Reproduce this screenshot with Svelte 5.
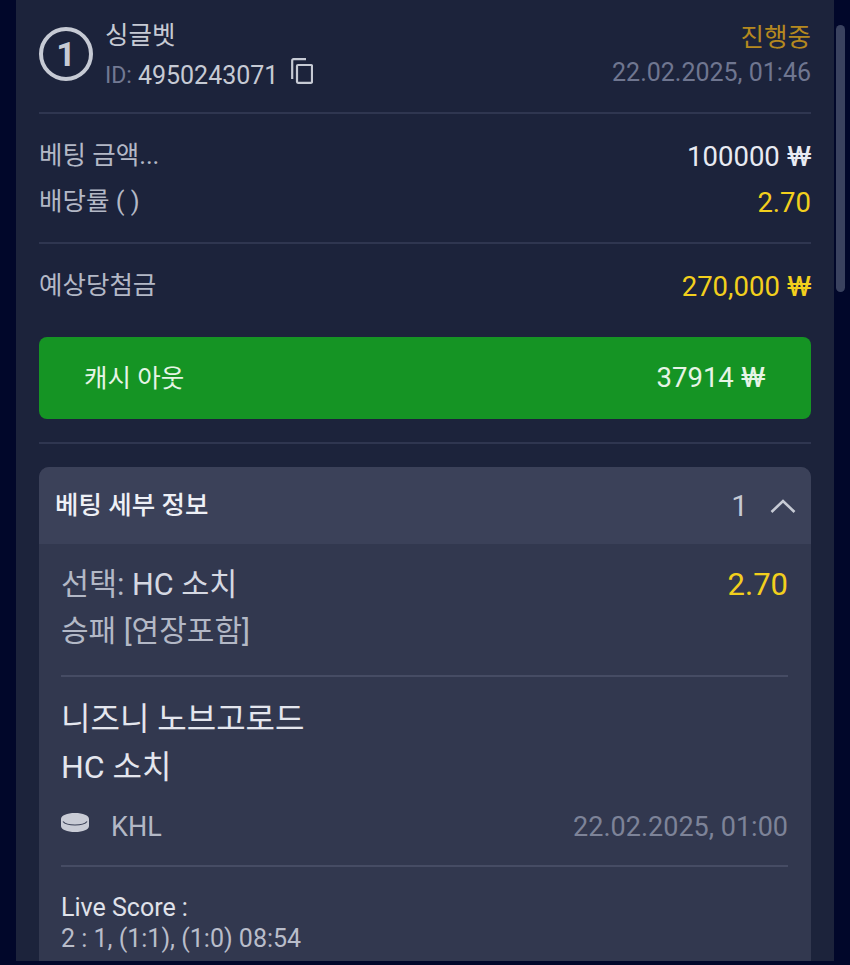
<script lang="ts">
	const rows = [
		{ label: '베팅 금액...', value: '100000', won: true, gold: false },
		{ label: '배당률 ( )', value: '2.70', won: false, gold: true }
	];
</script>

<div class="page">
	<div class="card">
		<!-- header -->
		<div class="head">
			<div class="badge">1</div>
			<div class="head-left">
				<div class="type">싱글벳</div>
				<div class="bet-id">
					<span class="id-label">ID:</span> 4950243071
					<svg class="copy" viewBox="0 0 22 26" width="22" height="26" fill="none" stroke="currentColor" stroke-width="2.2">
						<path d="M1.200 21V2.500a1.300 1.300 0 0 1 1.300-1.300H15" />
						<rect x="6" y="7" width="15" height="17.800" rx="1" />
					</svg>
				</div>
			</div>
			<div class="head-right">
				<div class="status">진행중</div>
				<div class="date">22.02.2025, 01:46</div>
			</div>
		</div>

		<div class="rows">
			{#each rows as r}
				<div class="row">
					<span class="label">{r.label}</span>
					<span class:gold={r.gold} class="value">{r.value}{#if r.won}{' '}<span class="won">₩</span>{/if}</span>
				</div>
			{/each}
		</div>

		<div class="expected">
			<span class="label">예상당첨금</span>
			<span class="value gold">270,000 <span class="won">₩</span></span>
		</div>

		<button class="cashout">
			<span class="cashout-label">캐시 아웃</span>
			<span class="cashout-value">37914 <span class="won">₩</span></span>
		</button>

		<div class="sep"></div>

		<!-- details -->
		<div class="details">
			<div class="details-head">
				<span class="details-title">베팅 세부 정보</span>
				<span class="details-count">1</span>
				<svg class="chevron" viewBox="0 0 26 16" width="26" height="16" fill="none" stroke="currentColor" stroke-width="2.6">
					<path d="M1.500 14 13 3l11.500 11" />
				</svg>
			</div>
			<div class="details-body">
				<div class="pick">
					<div>
						<div class="pick-name"><span class="muted">선택:</span> HC 소치</div>
						<div class="market">승패 [연장포함]</div>
					</div>
					<div class="odds">2.70</div>
				</div>
				<div class="teams">
					<div>니즈니 노브고로드</div>
					<div>HC 소치</div>
				</div>
				<div class="league">
					<svg viewBox="0 0 28 20" width="28" height="20">
						<path d="M0 6c0-3.500 6-6 14-6s14 2.500 14 6v7c0 3.500-6 6-14 6S0 16.500 0 13z" fill="#c9ccd6" />
						<path d="M2 8.500c2 2.500 6.500 3.500 12 3.500s10-1 12-3.500" fill="none" stroke="#3a4056" stroke-width="1.200" />
					</svg>
					<span class="league-name">KHL</span>
					<span class="league-date">22.02.2025, 01:00</span>
				</div>
				<div class="score">
					<div class="score-title">Live Score :</div>
					<div class="score-line">2 : 1, (1:1), (1:0) 08:54</div>
				</div>
			</div>
		</div>
	</div>
	<div class="scrollbar"></div>
</div>

<style>
	:global(body) {
		margin: 0;
		background: #01072a;
		font-family: Roboto, 'Noto Sans CJK KR', sans-serif;
	}

	.page {
		height: 965px;
		overflow: hidden;
		position: relative;
		padding: 0 16px;
		box-sizing: border-box;
	}

	.card {
		display: flex;
		flex-direction: column;
		height: 961px;
		box-sizing: border-box;
		background: #1c233b;
		padding: 0 23px;
		overflow: hidden;
	}

	.scrollbar {
		position: absolute;
		left: 836px;
		top: 25px;
		width: 9px;
		height: 267px;
		border-radius: 5px;
		background: #3a425f;
	}

	/* header */
	.head {
		display: flex;
		align-items: flex-start;
		flex-shrink: 0;
		height: 114px;
		box-sizing: border-box;
		border-bottom: 2px solid #2f3650;
	}

	.badge {
		width: 54px;
		height: 54px;
		box-sizing: border-box;
		margin-top: 27px;
		border: 4px solid #c6cad4;
		border-radius: 50%;
		color: #c6cad4;
		font-size: 34px;
		font-weight: 700;
		line-height: 46px;
		text-align: center;
		flex-shrink: 0;
	}

	.head-left {
		margin-left: 12px;
		padding-top: 18px;
	}

	.type {
		font-size: 25.5px;
		line-height: 34px;
		color: #c6cad4;
	}

	.bet-id {
		display: flex;
		align-items: center;
		gap: 6px;
		margin-top: 7px;
		font-size: 25px;
		line-height: 34px;
		color: #c6cad4;
	}

	.id-label {
		color: #727993;
		font-size: 23px;
	}

	.copy {
		margin-left: 7px;
		margin-top: -11px;
		color: #c6cad4;
	}

	.head-right {
		margin-left: auto;
		padding-top: 20px;
		text-align: right;
	}

	.status {
		font-size: 25.5px;
		line-height: 34px;
		color: #b5891f;
	}

	.date {
		margin-top: 2px;
		font-size: 25px;
		line-height: 34px;
		color: #6f7690;
	}

	/* amounts */
	.rows {
		flex-shrink: 0;
		padding: 19px 0 17px;
		border-bottom: 2px solid #2f3650;
	}

	.row {
		display: flex;
		justify-content: space-between;
		align-items: center;
		height: 46px;
	}

	.label {
		font-size: 25.5px;
		line-height: 46px;
		margin-top: -2px;
		color: #b3b8c6;
	}

	.value {
		font-size: 27.5px;
		color: #e8eaf2;
	}

	.value.gold {
		color: #f2cf1d;
	}

	/* won sign is wider in the app's font */
	.won {
		display: inline-block;
		margin-left: 4px;
		transform: scaleX(1.2);
		transform-origin: right center;
	}

	.expected {
		display: flex;
		justify-content: space-between;
		align-items: center;
		flex-shrink: 0;
		height: 46px;
		padding: 19px 0 28px;
	}

	.cashout {
		display: flex;
		justify-content: space-between;
		align-items: center;
		flex-shrink: 0;
		width: 100%;
		height: 82px;
		padding: 0 46px 2px 45px;
		border: none;
		border-radius: 8px;
		background: #159424;
		color: #e6f4e6;
		font-family: inherit;
	}

	.cashout-label {
		margin-top: -4px;
		font-size: 25.500px;
	}

	.cashout-value {
		font-size: 27.500px;
	}

	.sep {
		flex-shrink: 0;
		height: 2px;
		margin: 23px 0;
		background: #2f3650;
	}

	.details {
		flex: 1;
		border-radius: 10px 10px 0 0;
		background: #32384f;
		overflow: hidden;
	}

	.details-head {
		display: flex;
		align-items: center;
		height: 77px;
		padding: 0 15px 0 16px;
		background: #3b4159;
		color: #eef0f6;
	}

	.details-title {
		margin-top: -6px;
		font-size: 25.500px;
		font-weight: 500;
	}

	.details-count {
		margin-left: auto;
		margin-right: 22px;
		font-size: 30px;
		color: #c6cad4;
	}

	.chevron {
		color: #c6cad4;
	}

	.details-body {
		padding: 0 23px 0 22px;
	}

	.pick {
		display: flex;
		justify-content: space-between;
		align-items: flex-start;
		height: 133px;
		padding-top: 21px;
		box-sizing: border-box;
		border-bottom: 2px solid #464c64;
	}

	.pick-name {
		font-size: 30.500px;
		line-height: 40px;
		color: #d5d8e2;
	}

	.muted {
		color: #b3b8c6;
	}

	.market {
		margin-top: 6px;
		font-size: 30px;
		line-height: 40px;
		color: #b3b8c6;
	}

	.odds {
		font-size: 31px;
		line-height: 40px;
		color: #f2cf1d;
	}

	.teams {
		padding-top: 18px;
		font-size: 32px;
		line-height: 48px;
		color: #e4e6ee;
	}

	.league {
		display: flex;
		align-items: center;
		height: 76px;
		padding-bottom: 2px;
		box-sizing: border-box;
		border-bottom: 2px solid #464c64;
	}

	.league svg {
		margin-top: -8px;
	}

	.league-name {
		margin-left: 22px;
		font-size: 27px;
		color: #b3b8c6;
	}

	.league-date {
		margin-left: auto;
		font-size: 27px;
		color: #7d8398;
	}

	.score {
		padding-top: 25px;
		font-size: 25px;
		line-height: 31px;
	}

	.score-title {
		color: #e0e2ea;
	}

	.score-line {
		color: #b9bdca;
	}
</style>
